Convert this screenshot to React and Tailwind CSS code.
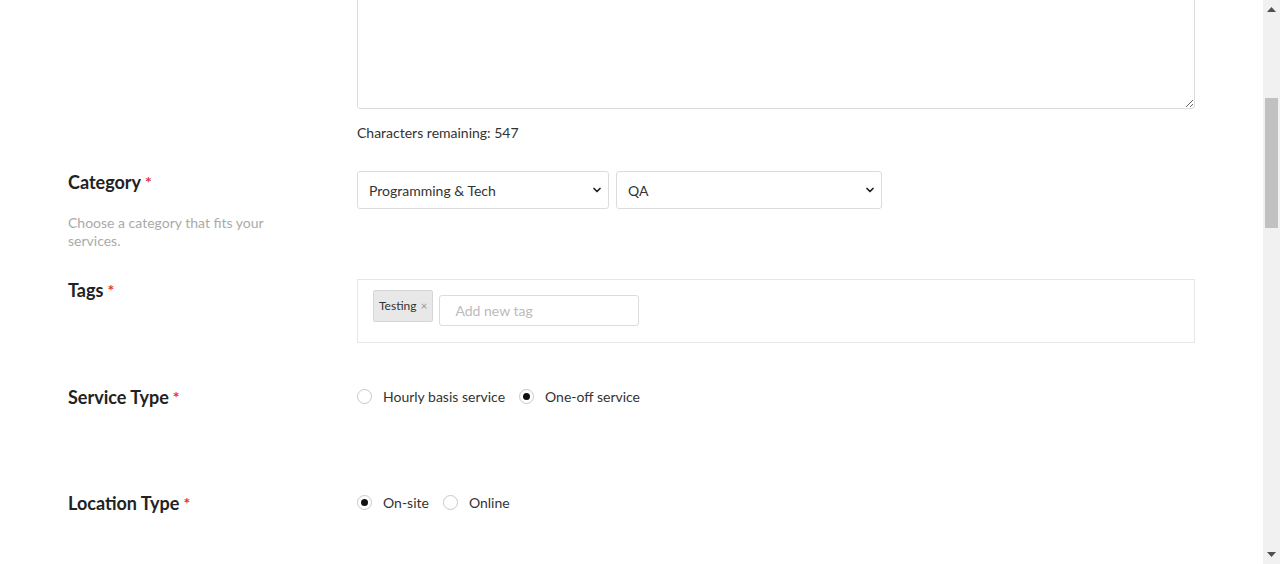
import { ChevronDown } from 'lucide-react'

const font = { fontFamily: 'Lato, "Open Sans", sans-serif' }

function Label({ children }) {
  return (
    <h3 className="text-[18px] leading-[22px] font-bold text-[#222]">
      {children}<span className="ml-[4px] text-[#e3342f] text-[16px] align-top">*</span>
    </h3>
  )
}

function Radio({ checked, label }) {
  return (
    <label className="flex items-center gap-[11px] text-[14px] text-[#333]">
      <span className="w-[15px] h-[15px] rounded-full border border-[#c8c8c8] bg-white flex items-center justify-center">
        {checked && <span className="w-[7px] h-[7px] rounded-full bg-[#111]" />}
      </span>
      {label}
    </label>
  )
}

function Select({ value, width }) {
  return (
    <div className={`relative ${width}`}>
      <select
        defaultValue={value}
        className="appearance-none w-full h-[38px] pl-[11px] pr-8 text-[14px] text-[#333] bg-white border border-[#dcdcdc] rounded-[3px] outline-none"
      >
        <option>{value}</option>
      </select>
      <ChevronDown size={12} strokeWidth={3.5} className="absolute right-[6px] top-[13px] text-[#222] pointer-events-none" />
    </div>
  )
}

export default function App() {
  return (
    <div className="flex h-[564px] overflow-hidden bg-white" style={font}>
      <main className="flex-1 px-[68px]">
        {/* Description */}
        <div className="flex">
          <div className="w-[289px] shrink-0" />
          <div className="flex-1">
            <div className="h-[109px] overflow-hidden flex flex-col justify-end">
              <textarea className="w-full h-[160px] shrink-0 border border-[#dcdcdc] rounded-[3px] bg-white outline-none" />
            </div>
            <p className="mt-[14px] text-[14px] leading-[20px] text-[#333]">Characters remaining: 547</p>
          </div>
        </div>

        {/* Category */}
        <div className="flex mt-[28px]">
          <div className="w-[289px] shrink-0">
            <Label>Category</Label>
            <p className="mt-[21px] text-[14px] leading-[18px] text-[#aaa] w-[210px]">
              Choose a category that fits your services.
            </p>
          </div>
          <div className="flex-1 flex gap-[7px] items-start">
            <Select value="Programming & Tech" width="w-[252px]" />
            <Select value="QA" width="w-[266px]" />
          </div>
        </div>

        {/* Tags */}
        <div className="flex mt-[29px]">
          <div className="w-[289px] shrink-0">
            <Label>Tags</Label>
          </div>
          <div className="flex-1 h-[64px] border border-[#e6e6e6] pt-[10px] pl-[15px] flex items-start gap-[6px]">
            <span className="h-[32px] px-[5px] flex items-center gap-[4px] bg-[#e8e8e8] border border-[#d6d6d6] rounded-[2px] text-[12px] text-[#333]">
              Testing <span className="text-[#999] text-[12px]">×</span>
            </span>
            <input
              placeholder="Add new tag"
              className="mt-[5px] w-[200px] h-[31px] px-[15px] text-[14px] border border-[#dcdcdc] rounded-[3px] outline-none placeholder:text-[#bbb]"
            />
          </div>
        </div>

        {/* Service type */}
        <div className="flex mt-[43px]">
          <div className="w-[289px] shrink-0">
            <Label>Service Type</Label>
          </div>
          <div className="flex-1 flex items-center gap-[14px] h-[20px]">
            <Radio label="Hourly basis service" />
            <Radio checked label="One-off service" />
          </div>
        </div>

        {/* Location type */}
        <div className="flex mt-[84px]">
          <div className="w-[289px] shrink-0">
            <Label>Location Type</Label>
          </div>
          <div className="flex-1 flex items-center gap-[14px] h-[20px]">
            <Radio checked label="On-site" />
            <Radio label="Online" />
          </div>
        </div>
      </main>

      {/* scrollbar */}
      <div className="w-[17px] shrink-0 bg-[#f1f1f1] flex flex-col items-center">
        <svg width="9" height="5" viewBox="0 0 9 5" className="mt-[7px] shrink-0">
          <path d="M0 5 L4.5 0 L9 5 Z" fill="#505050" />
        </svg>
        <div className="mt-[86px] w-[13px] h-[130px] bg-[#c1c1c1]" />
        <div className="flex-1" />
        <svg width="9" height="5" viewBox="0 0 9 5" className="mb-[7px] shrink-0">
          <path d="M0 0 L9 0 L4.5 5 Z" fill="#505050" />
        </svg>
      </div>
    </div>
  )
}
